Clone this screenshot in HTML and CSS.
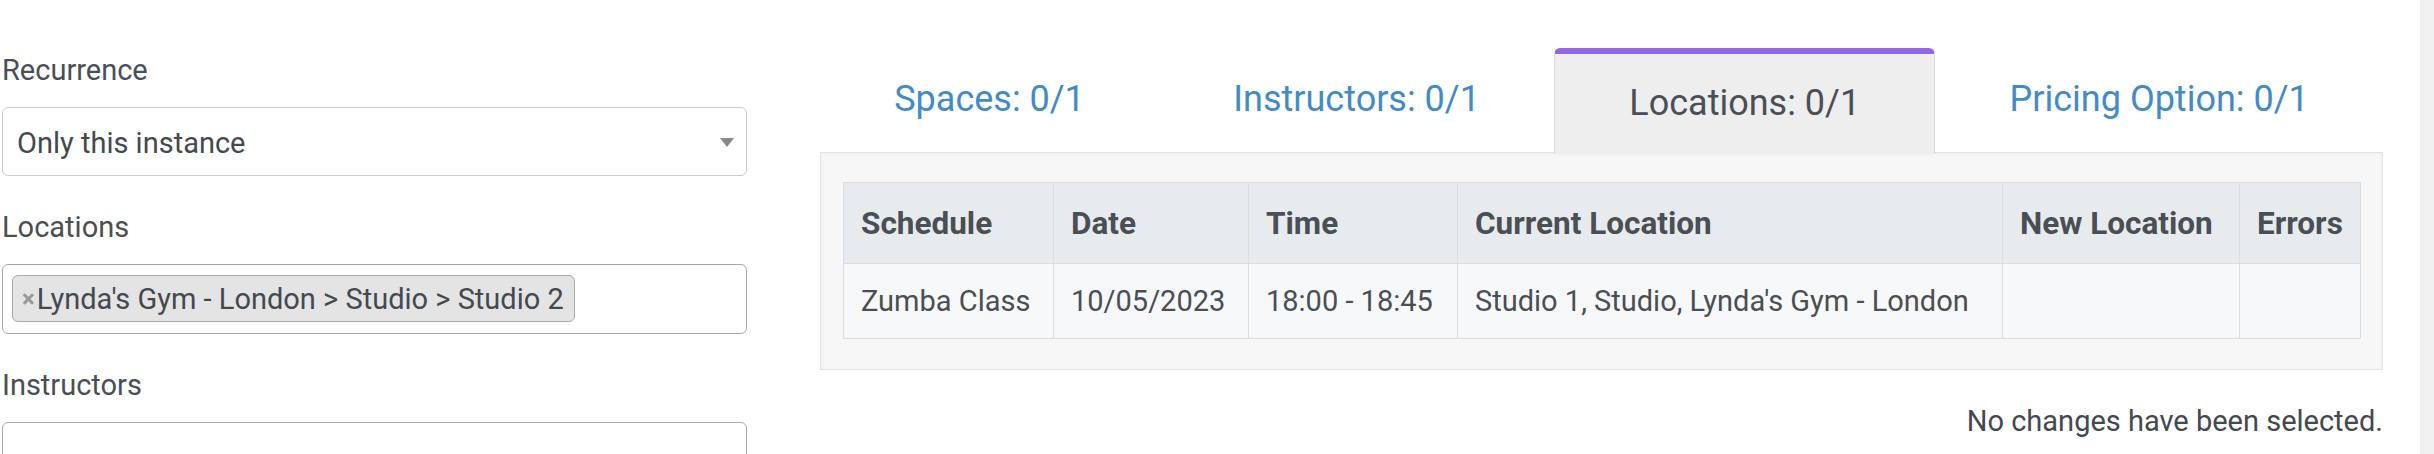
FILE: index.html
```html
<!DOCTYPE html>
<html>
<head>
<meta charset="utf-8">
<link rel="stylesheet" href="styles.css">
</head>
<body>
<div class="page">
  <div class="form-col">
    <div class="group">
      <label class="label">Recurrence</label>
      <div class="select">
        <span class="select-value">Only this instance</span>
        <span class="caret"></span>
      </div>
    </div>
    <div class="group">
      <label class="label">Locations</label>
      <div class="multi">
        <span class="tag"><span class="tag-x">×</span>Lynda's Gym - London &gt; Studio &gt; Studio 2</span>
      </div>
    </div>
    <div class="group">
      <label class="label">Instructors</label>
      <div class="multi"></div>
    </div>
  </div>
  <div class="main-col">
    <div class="tabs">
      <div class="tab">Spaces: 0/1</div>
      <div class="tab">Instructors: 0/1</div>
      <div class="tab active">Locations: 0/1</div>
      <div class="tab">Pricing Option: 0/1</div>
    </div>
    <div class="panel">
      <table class="grid">
        <thead>
          <tr>
            <th class="c1">Schedule</th>
            <th class="c2">Date</th>
            <th class="c3">Time</th>
            <th class="c4">Current Location</th>
            <th class="c5">New Location</th>
            <th class="c6">Errors</th>
          </tr>
        </thead>
        <tbody>
          <tr>
            <td>Zumba Class</td>
            <td>10/05/2023</td>
            <td>18:00 - 18:45</td>
            <td>Studio 1, Studio, Lynda's Gym - London</td>
            <td></td>
            <td></td>
          </tr>
        </tbody>
      </table>
    </div>
    <div class="status">No changes have been selected.</div>
  </div>
  <div class="strip"></div>
</div>
</body>
</html>
```
FILE: styles.css
```css
html, body {
  margin: 0;
  padding: 0;
  background: #ffffff;
}
body {
  font-family: Roboto, "Liberation Sans", sans-serif;
  font-size: 29px;
  color: #4a4f55;
  height: 454px;
  overflow: hidden;
}
.page {
  display: flex;
  align-items: stretch;
  height: 454px;
  padding-left: 2px;
  box-sizing: border-box;
}
.form-col {
  width: 745px;
  flex: 0 0 745px;
  padding-top: 49px;
  box-sizing: border-box;
}
.group {
  margin-bottom: 30px;
}
.label {
  display: block;
  line-height: 42px;
  height: 42px;
  margin-bottom: 16px;
}
.select {
  height: 69px;
  box-sizing: border-box;
  border: 1px solid #c9ced4;
  border-radius: 6px;
  display: flex;
  align-items: center;
  justify-content: space-between;
  padding: 2px 12px 0 14px;
}
.select-value {
  line-height: 42px;
  color: #444950;
}
.caret {
  width: 0;
  height: 0;
  border-top: 9px solid #888888;
  border-left: 7px solid transparent;
  border-right: 7px solid transparent;
  margin-top: 0;
}
.multi {
  height: 70px;
  box-sizing: border-box;
  border: 1px solid #aaaaaa;
  border-radius: 6px;
  padding: 10px 9px;
  display: flex;
  align-items: flex-start;
}
.tag {
  display: inline-flex;
  align-items: center;
  height: 47px;
  box-sizing: border-box;
  background: #e4e4e4;
  border: 1px solid #aaaaaa;
  border-radius: 6px;
  padding: 0 10px 0 9px;
  line-height: 42px;
  color: #444950;
  white-space: nowrap;
}
.tag-x {
  color: #999999;
  font-weight: bold;
  font-size: 24px;
  margin-right: 2px;
}
.main-col {
  width: 1563px;
  flex: 0 0 1563px;
  margin-left: 73px;
  padding-top: 48px;
  box-sizing: border-box;
}
.tabs {
  display: flex;
  height: 104px;
}
.tab {
  flex: 1 1 auto;
  height: 104px;
  box-sizing: border-box;
  display: flex;
  align-items: center;
  justify-content: center;
  padding: 0 0 3px 0;
  font-size: 36px;
  color: #428bca;
  white-space: nowrap;
}
.tab.active {
  background: #eeeeee;
  color: #4a4f55;
  border-top: 6px solid #9466e8;
  border-left: 1px solid #d8dde4;
  border-right: 1px solid #d8dde4;
  border-radius: 6px 6px 0 0;
  position: relative;
  z-index: 1;
  height: 106px;
}
.panel {
  background: #f7f7f7;
  border: 1px solid #dfe3e8;
  padding: 29px 21px 30px 22px;
  box-shadow: inset 0 2px 4px rgba(0, 0, 0, 0.03);
}
.grid {
  width: 100%;
  border-collapse: collapse;
  table-layout: fixed;
}
.grid th,
.grid td {
  border: 1px solid #d9dee4;
  text-align: left;
  padding: 0 17px;
  white-space: nowrap;
  overflow: hidden;
}
.grid th {
  background: #e8ebee;
  font-size: 31.5px;
  font-weight: bold;
  height: 80px;
  color: #4a4f55;
}
.grid td {
  background: #f7f8fa;
  height: 74px;
  color: #4a4f55;
}
.c1 { width: 175px; }
.c2 { width: 160px; }
.c3 { width: 174px; }
.c4 { width: 510px; }
.c5 { width: 202px; }
.c6 { width: auto; }
.status {
  text-align: right;
  margin-top: 30px;
  line-height: 42px;
  color: #444950;
}
.strip {
  width: 14px;
  flex: 0 0 14px;
  margin-left: 37px;
  background: #f0f0f0;
}
```
